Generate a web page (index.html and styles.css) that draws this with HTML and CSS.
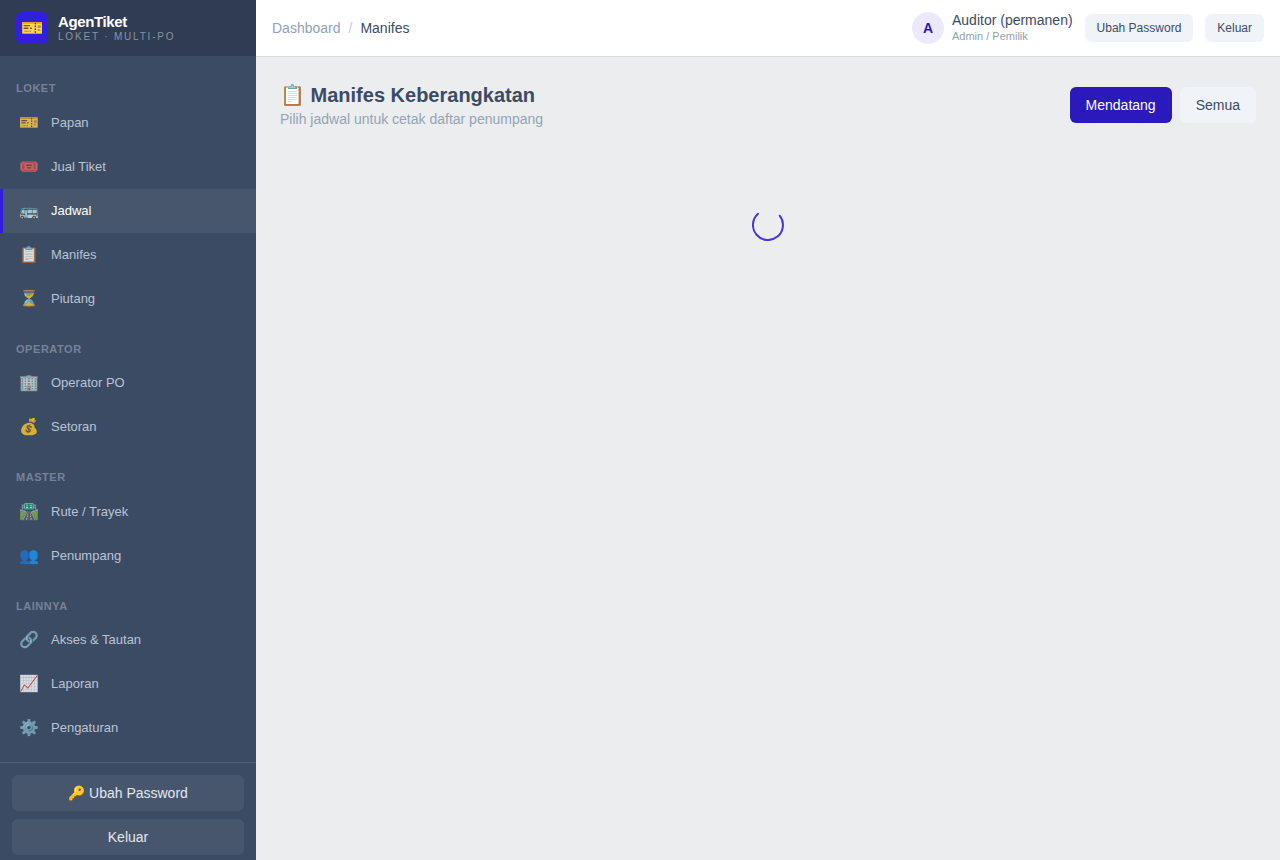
FILE: index.html
```html
<!DOCTYPE html>
<html lang="id">
<head>
    <meta charset="UTF-8">
    <meta name="viewport" content="width=device-width, initial-scale=1.0">
    <title>AgenTiket - Manifes</title>
    <link rel="stylesheet" href="styles.css">
</head>
<body>
    <div class="app">
        <aside class="sidebar">
            <div class="brand">
                <div class="brand-logo">🎫</div>
                <div>
                    <div class="brand-name">AgenTiket</div>
                    <div class="brand-sub">LOKET · MULTI-PO</div>
                </div>
            </div>
            <nav class="nav">
                <div class="nav-title">Loket</div>
                <a class="nav-link" href="#"><span class="nav-icon">🎫</span>Papan</a>
                <a class="nav-link" href="#"><span class="nav-icon">🎟️</span>Jual Tiket</a>
                <a class="nav-link active" href="#"><span class="nav-icon">🚌</span>Jadwal</a>
                <a class="nav-link" href="#"><span class="nav-icon">📋</span>Manifes</a>
                <a class="nav-link" href="#"><span class="nav-icon">⏳</span>Piutang</a>
                <div class="nav-title">Operator</div>
                <a class="nav-link" href="#"><span class="nav-icon">🏢</span>Operator PO</a>
                <a class="nav-link" href="#"><span class="nav-icon">💰</span>Setoran</a>
                <div class="nav-title">Master</div>
                <a class="nav-link" href="#"><span class="nav-icon">🛣️</span>Rute / Trayek</a>
                <a class="nav-link" href="#"><span class="nav-icon">👥</span>Penumpang</a>
                <div class="nav-title">Lainnya</div>
                <a class="nav-link" href="#"><span class="nav-icon">🔗</span>Akses &amp; Tautan</a>
                <a class="nav-link" href="#"><span class="nav-icon">📈</span>Laporan</a>
                <a class="nav-link" href="#"><span class="nav-icon">⚙️</span>Pengaturan</a>
            </nav>
            <div class="sidebar-footer">
                <button class="btn btn-dark">🔑 Ubah Password</button>
                <button class="btn btn-dark">Keluar</button>
            </div>
        </aside>
        <div class="main">
            <header class="header">
                <div class="breadcrumb">
                    <a href="#">Dashboard</a>
                    <span class="sep">/</span>
                    <span>Manifes</span>
                </div>
                <div class="header-right">
                    <div class="user">
                        <div class="avatar">A</div>
                        <div>
                            <div class="user-name">Auditor (permanen)</div>
                            <div class="user-role">Admin / Pemilik</div>
                        </div>
                    </div>
                    <button class="btn btn-light btn-sm">Ubah Password</button>
                    <button class="btn btn-light btn-sm">Keluar</button>
                </div>
            </header>
            <main class="content">
                <div class="page-head">
                    <div>
                        <h1>📋 Manifes Keberangkatan</h1>
                        <p>Pilih jadwal untuk cetak daftar penumpang</p>
                    </div>
                    <div class="filters">
                        <button class="btn btn-primary">Mendatang</button>
                        <button class="btn btn-light">Semua</button>
                    </div>
                </div>
                <div class="loading">
                    <svg class="spinner" viewBox="0 0 32 32">
                        <path d="M27.7 6.7A15 15 0 1 1 6 4.8"/>
                    </svg>
                </div>
            </main>
        </div>
    </div>
</body>
</html>
```

FILE: styles.css
```css
* {
    box-sizing: border-box;
}
body {
    margin: 0;
    font-family: "Liberation Sans", Arial, sans-serif;
    font-size: 14px;
    line-height: 1.5;
    color: #3c4b64;
    background-color: #ebedef;
}
a {
    color: inherit;
    text-decoration: none;
}
.app {
    display: flex;
    min-height: 100vh;
}

/* sidebar */
.sidebar {
    display: flex;
    flex-direction: column;
    flex-shrink: 0;
    position: sticky;
    top: 0;
    width: 256px;
    height: 100vh;
    overflow-y: auto;
    scrollbar-width: none;
    background-color: #3c4b64;
}
.brand {
    display: flex;
    align-items: center;
    gap: 10px;
    flex-shrink: 0;
    height: 56px;
    padding: 0 16px;
    background-color: #303c53;
}
.brand-logo {
    display: flex;
    align-items: center;
    justify-content: center;
    width: 32px;
    height: 32px;
    border-radius: 6px;
    font-size: 18px;
    background-color: #321fdb;
}
.brand-name {
    font-size: 15px;
    font-weight: bold;
    line-height: 18px;
    letter-spacing: -0.025em;
    color: #fff;
}
.brand-sub {
    font-size: 10px;
    line-height: 12px;
    letter-spacing: 0.18em;
    color: #8a93a2;
}
.nav {
    flex: 1 0 auto;
    padding: 4px 0 12px;
}
.nav-title {
    padding: 20px 16px 4px;
    font-size: 11px;
    font-weight: bold;
    letter-spacing: 0.05em;
    text-transform: uppercase;
    color: #768299;
}
.nav-link {
    display: flex;
    align-items: center;
    gap: 12px;
    height: 44px;
    padding: 0 16px;
    border-left: 3px solid transparent;
    font-size: 13px;
    color: #b9c3d3;
}
.nav-link:hover,
.nav-link.active {
    color: #fff;
    background-color: #48566d;
}
.nav-link.active {
    border-left-color: #321fdb;
}
.nav-icon {
    display: flex;
    justify-content: center;
    width: 20px;
    font-size: 16px;
    opacity: 0.8;
}
.sidebar-footer {
    display: flex;
    flex-direction: column;
    gap: 8px;
    padding: 12px;
    border-top: 1px solid #505d74;
}

/* buttons */
.btn {
    padding: 8px 16px;
    border: 0;
    border-radius: 6px;
    font-family: inherit;
    font-size: 14px;
    line-height: 20px;
    cursor: pointer;
}
.btn-sm {
    padding: 6px 12px;
    font-size: 12px;
    line-height: 16px;
}
.btn-dark {
    color: #e2e8f0;
    background-color: #48566d;
}
.btn-light {
    color: #3c4b64;
    background-color: #f0f4f9;
}
.btn-primary {
    color: #fff;
    background-color: #2a1abb;
}

/* header */
.main {
    flex: 1;
    min-width: 0;
}
.header {
    display: flex;
    align-items: center;
    justify-content: space-between;
    height: 57px;
    padding: 0 16px;
    border-bottom: 1px solid #d8dbe0;
    background-color: #fff;
}
.breadcrumb {
    display: flex;
    gap: 8px;
}
.breadcrumb a {
    color: #94a0b8;
}
.breadcrumb .sep {
    color: #c4c9d0;
}
.header-right {
    display: flex;
    align-items: center;
    gap: 12px;
}
.user {
    display: flex;
    align-items: center;
    gap: 8px;
}
.avatar {
    display: flex;
    align-items: center;
    justify-content: center;
    width: 32px;
    height: 32px;
    border-radius: 50%;
    font-weight: bold;
    color: #2a1abb;
    background-color: #ebe9fb;
}
.user-name {
    line-height: 16px;
}
.user-role {
    font-size: 11px;
    line-height: 16px;
    color: #94a0b0;
}

/* page */
.content {
    padding: 24px;
}
.page-head {
    display: flex;
    align-items: center;
    justify-content: space-between;
}
.page-head h1 {
    margin: 0;
    font-size: 20px;
    line-height: 28px;
}
.page-head p {
    margin: 0;
    line-height: 20px;
    color: #94a3b8;
}
.filters {
    display: flex;
    gap: 8px;
}
.loading {
    display: flex;
    justify-content: center;
    padding: 80px 0;
}
.spinner {
    width: 32px;
    height: 32px;
    fill: none;
    stroke: #4636dc;
    stroke-width: 2;
    stroke-linecap: round;
}
```
